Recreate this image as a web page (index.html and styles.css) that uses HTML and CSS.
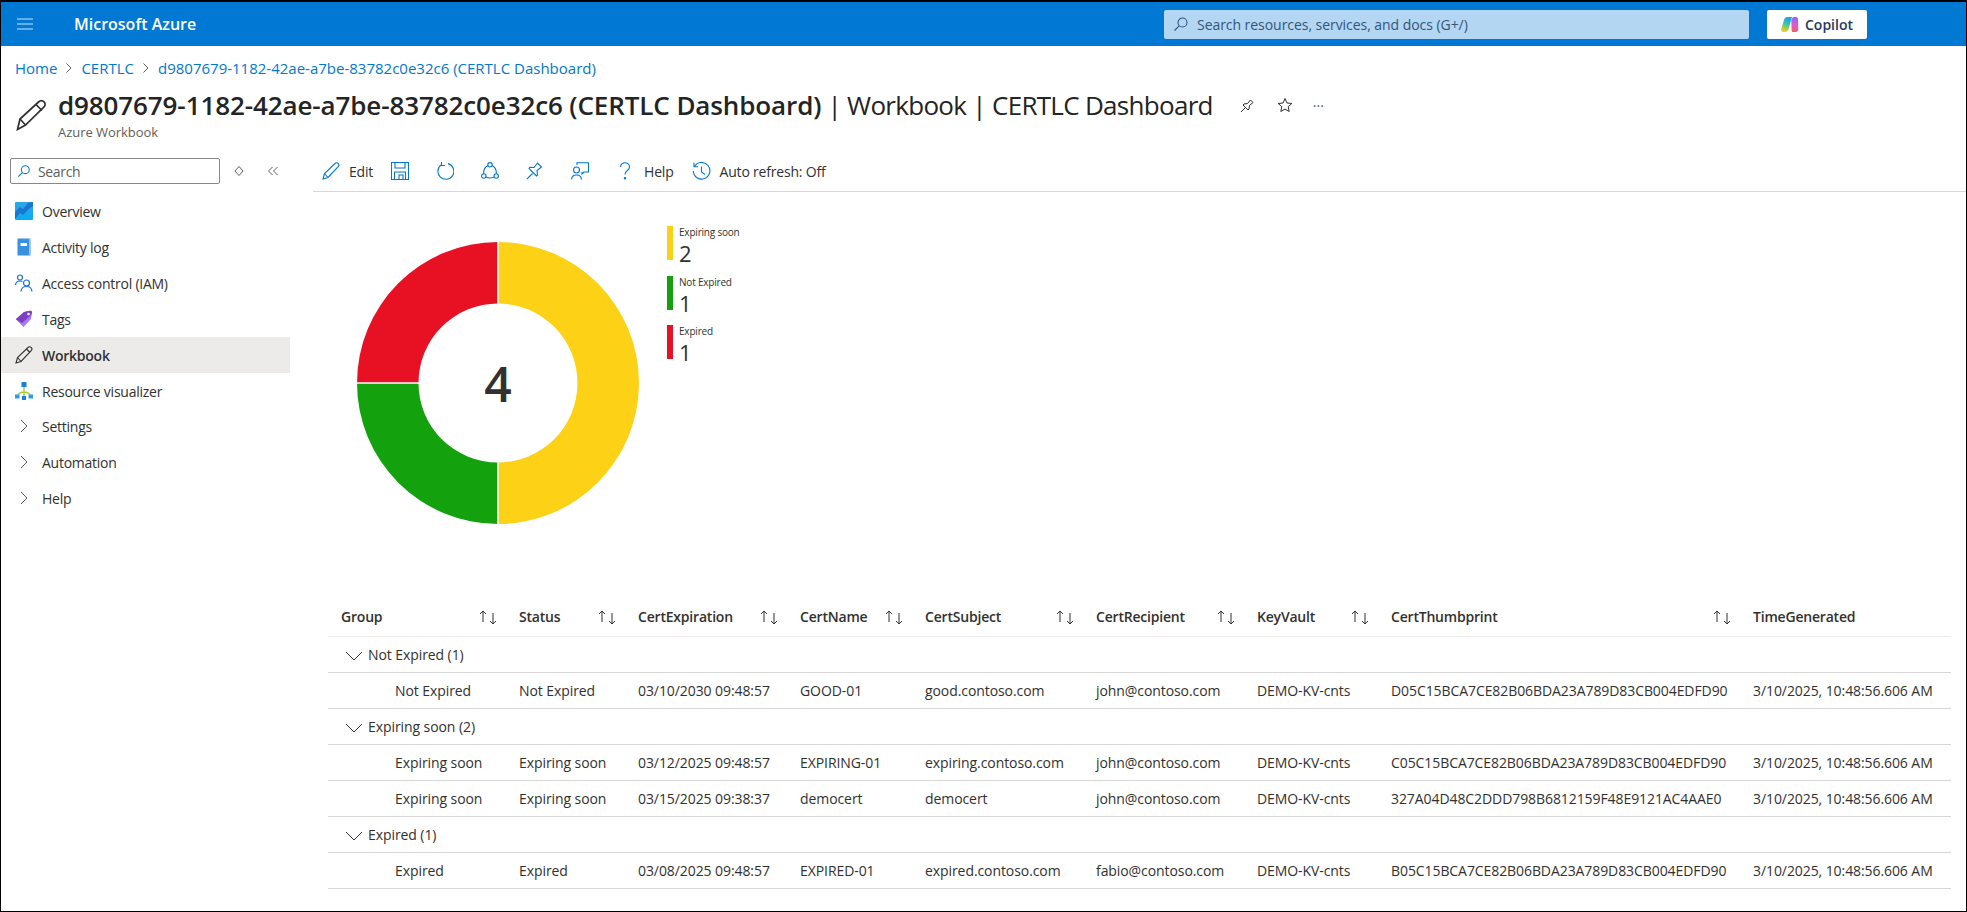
FILE: index.html
```html
<!DOCTYPE html>
<html lang="en">
<head>
  <meta charset="UTF-8">
  <title>CERTLC Dashboard - Microsoft Azure</title>
  <link rel="stylesheet" href="styles.css">
</head>
<body>
<div class="frame">

  <!-- Top bar -->
  <header class="topbar">
    <svg class="burger" width="16" height="12" viewBox="0 0 16 12"><path d="M0 1h16M0 6h16M0 11h16" stroke="#cfe4f7" stroke-width="1.2"/></svg>
    <span class="brand">Microsoft Azure</span>
    <div class="global-search">
      <svg width="16" height="16" viewBox="0 0 16 16" fill="none" stroke="#33557a" stroke-width="1.1"><circle cx="9.5" cy="6.5" r="4.5"/><path d="M6.2 9.8 1.5 14.5"/></svg>
      <span>Search resources, services, and docs (G+/)</span>
    </div>
    <div class="copilot">
      <svg width="19" height="15" viewBox="0 0 19 15">
        <defs>
          <linearGradient id="cpA" x1="0.6" y1="0" x2="0.3" y2="1"><stop offset="0" stop-color="#1f9cf0"/><stop offset=".45" stop-color="#36c7a8"/><stop offset=".8" stop-color="#b5d334"/><stop offset="1" stop-color="#ffc83a"/></linearGradient>
          <linearGradient id="cpB" x1="0.6" y1="0" x2="0.4" y2="1"><stop offset="0" stop-color="#7f6cf0"/><stop offset=".5" stop-color="#d65ad8"/><stop offset="1" stop-color="#f5604a"/></linearGradient>
        </defs>
        <path d="M6.500 0h4.500L7.500 12c-.4 1.600-1.500 3-3.500 3H2c-1.500 0-2.300-1.200-1.800-2.800L3 3c.5-1.800 1.700-3 3.500-3z" fill="url(#cpA)"/>
        <path d="M11.500 0h1.500c1.800 0 2.800 1 3.300 2.800L18.800 12c.4 1.600-.3 3-1.800 3h-2.500c-1 0-1.700-.5-2-1.500L9.700 3.500C9.500 2 10 0 11.500 0z" fill="url(#cpB)" transform="matrix(1 0 -.25 1 1.500 0)"/>
      </svg>
      <span>Copilot</span>
    </div>
  </header>

  <!-- Breadcrumb -->
  <nav class="crumbs">
    <a>Home</a><svg class="crumb-sep" width="8" height="12" viewBox="0 0 8 12"><path d="M1.500 1.500 6 6l-4.500 4.500" fill="none" stroke="#605e5c"/></svg>
    <a>CERTLC</a><svg class="crumb-sep" width="8" height="12" viewBox="0 0 8 12"><path d="M1.500 1.500 6 6l-4.500 4.500" fill="none" stroke="#605e5c"/></svg>
    <a>d9807679-1182-42ae-a7be-83782c0e32c6 (CERTLC Dashboard)</a>
  </nav>

  <!-- Page title -->
  <div class="title-row">
    <svg class="title-icon" width="31" height="32" viewBox="0 0 31 32" fill="none" stroke="#323130" stroke-width="1.700"><path d="M1.500 30.500 4 20 22.500 3c1.800-1.700 4-1.700 5.500-.2 1.600 1.600 1.500 3.800-.2 5.400L9.500 26z"/><path d="M4 20l5.500 6M20 5.500l6 6"/></svg>
    <div class="title-text">
      <div class="title-line">
        <h1><b>d9807679-1182-42ae-a7be-83782c0e32c6 (CERTLC Dashboard)</b> | Workbook | CERTLC Dashboard</h1>
        <svg class="title-pin" width="16" height="16" viewBox="0 0 16 16" fill="none" stroke="#323130"><path d="M1 15l4.500-4.500M3 8l5 5 1-1 .5-3.500L13 5.500 10.500 3 7.500 6.500 4 7z"/></svg>
        <svg class="title-star" width="16" height="16" viewBox="0 0 16 16" fill="none" stroke="#323130"><path d="M8 1.500l2 4.500 4.800.5-3.600 3.200 1 4.800L8 12.100l-4.200 2.400 1-4.800L1.200 6.500 6 6z"/></svg>
        <span class="title-more">···</span>
      </div>
      <div class="subtitle">Azure Workbook</div>
    </div>
  </div>

  <div class="content">

    <!-- Resource menu -->
    <aside class="sidebar">
      <div class="side-top">
        <div class="side-search">
          <svg width="14" height="14" viewBox="0 0 16 16" fill="none" stroke="#0078d4" stroke-width="1.200"><circle cx="9.500" cy="6.500" r="4.500"/><path d="M6.200 9.800 1.500 14.500"/></svg>
          <span>Search</span>
        </div>
        <svg class="side-diamond" width="10" height="12" viewBox="0 0 10 12" fill="none" stroke="#605e5c"><path d="M5 1.500 9 6l-4 4.500L1 6z"/></svg>
        <svg class="side-collapse" width="12" height="10" viewBox="0 0 12 10" fill="none" stroke="#605e5c"><path d="M5.500 1 1.500 5l4 4M10.500 1l-4 4 4 4"/></svg>
      </div>
      <ul class="menu">
        <li>
          <svg width="18" height="18" viewBox="0 0 18 18"><defs><linearGradient id="ovG" x1="0" y1="0" x2="0" y2="1"><stop offset="0" stop-color="#2fa6e6"/><stop offset="1" stop-color="#07aef2"/></linearGradient></defs><rect width="18" height="18" rx="1" fill="url(#ovG)"/><path d="M0 10l5-5 3 2 5-6 3-1h2v4l-4 3-6 6-3-2-5 6z" fill="#1b76cf"/></svg>
          <span>Overview</span>
        </li>
        <li>
          <svg width="18" height="18" viewBox="0 0 18 18"><rect x="2" y="0" width="14" height="18" rx="1.500" fill="#9cc8ee"/><rect x="3" y="1" width="11" height="16" fill="#3a90e0"/><rect x="5.500" y="5" width="6.500" height="3" fill="#fff"/></svg>
          <span>Activity log</span>
        </li>
        <li>
          <svg width="18" height="18" viewBox="0 0 18 18" fill="none" stroke="#1d6fd6" stroke-width="1.200"><circle cx="5" cy="3.500" r="2.500"/><path d="M.5 11c.3-2.500 1.500-4 4.500-4 1 0 1.800.2 2.500.5"/><circle cx="11.500" cy="9" r="3"/><path d="M6 17.500c.2-3 2-5 5.500-5s5.300 2 5.500 5"/></svg>
          <span>Access control (IAM)</span>
        </li>
        <li>
          <svg width="18" height="18" viewBox="0 0 18 18"><path d="M9 2 15 .8c1.200-.2 2.200.8 2 2L16 9 8.500 17 .8 9.200z" fill="#a67af4"/><path d="M.8 9.200 9 2 15 .8c1.200-.2 2.200.8 2 2L16 5 7 13z" fill="#7b3fc4"/><circle cx="13.500" cy="4" r="1.300" fill="#fff"/></svg>
          <span>Tags</span>
        </li>
        <li class="active">
          <svg width="18" height="18" viewBox="0 0 18 18" fill="none" stroke="#323130" stroke-width="1.100"><path d="M1 17l1.500-5.500L13 1.500c1-1 2.300-1 3.200 0 .9.900.9 2.200 0 3.100L6 15.500z"/><path d="M2.500 11.500 6 15.500M11.500 3l3.500 3.500"/></svg>
          <span>Workbook</span>
        </li>
        <li>
          <svg width="18" height="18" viewBox="0 0 18 18"><path d="M9 5v10M3 13c1-2 3-3 6-3s5 1 6 3" fill="none" stroke="#a4cf3c" stroke-width="1.400"/><rect x="6.500" y="0" width="5" height="5" fill="#1c7fd8"/><rect x="0" y="12.500" width="4.500" height="4" fill="#2d9be8"/><rect x="13.500" y="12.500" width="4.500" height="4" fill="#2d9be8"/><rect x="7" y="14" width="4" height="4" fill="#1c7fd8"/></svg>
          <span>Resource visualizer</span>
        </li>
        <li class="group first-group">
          <svg width="18" height="18" viewBox="0 0 18 18" fill="none" stroke="#605e5c"><path d="M6 3l6 6-6 6"/></svg>
          <span>Settings</span>
        </li>
        <li class="group">
          <svg width="18" height="18" viewBox="0 0 18 18" fill="none" stroke="#605e5c"><path d="M6 3l6 6-6 6"/></svg>
          <span>Automation</span>
        </li>
        <li class="group">
          <svg width="18" height="18" viewBox="0 0 18 18" fill="none" stroke="#605e5c"><path d="M6 3l6 6-6 6"/></svg>
          <span>Help</span>
        </li>
      </ul>
    </aside>

    <main class="main">

      <!-- Toolbar -->
      <div class="toolbar">
        <div class="tool">
          <svg width="18" height="18" viewBox="0 0 18 18" fill="none" stroke="#0078d4" stroke-width="1.100"><path d="M1 17l1.500-5.500L13 1.500c1-1 2.300-1 3.200 0 .9.900.9 2.200 0 3.100L6 15.500z"/><path d="M2.500 11.500 6 15.500"/></svg>
          <span>Edit</span>
        </div>
        <div class="tool icon-only">
          <svg width="18" height="18" viewBox="0 0 18 18" fill="none" stroke="#0078d4" stroke-width="1.100"><path d="M.5.500h17v17H.5z"/><path d="M4 .5v5.500h10V.5M3.500 17.500V10h11v7.500M8 17.500V13h4v4.500"/></svg>
        </div>
        <div class="tool icon-only">
          <svg width="18" height="18" viewBox="0 0 18 18" fill="none" stroke="#0078d4" stroke-width="1.100"><path d="M5.500 2.600A8 8 0 1 0 12 1.600"/><path d="M5.500 0v3.500H9"/></svg>
        </div>
        <div class="tool icon-only">
          <svg width="18" height="18" viewBox="0 0 18 18" fill="none" stroke="#0078d4" stroke-width="1.100"><circle cx="9" cy="2.800" r="2.200"/><circle cx="2.800" cy="14" r="2.200"/><circle cx="15.200" cy="14" r="2.200"/><path d="M6.900 3.600C4 5 2.500 8 2.600 11.800M11.100 3.600c2.900 1.400 4.400 4.400 4.300 8.200M5 15c2.600 1.300 5.400 1.300 8 0"/></svg>
        </div>
        <div class="tool icon-only">
          <svg width="18" height="18" viewBox="0 0 18 18" fill="none" stroke="#0078d4" stroke-width="1.100"><path d="M.8 17.200 6.500 11.500M4 7.500l6.500 6.500 1-1-.5-4.500 4.500-3.500L11.500 1 8 5.500l-4-.2-1 1z"/></svg>
        </div>
        <div class="tool icon-only">
          <svg width="18" height="18" viewBox="0 0 18 18" fill="none" stroke="#0078d4" stroke-width="1.100"><path d="M6 3V.8h11.500V10H13l-2 2v-2"/><circle cx="5.500" cy="8" r="3"/><path d="M.5 17.500c.2-3 2-4.500 5-4.500s4.800 1.500 5 4.500"/></svg>
        </div>
        <div class="tool help">
          <svg width="12" height="18" viewBox="0 0 12 18" fill="none" stroke="#0078d4" stroke-width="1.100"><path d="M1.500 5c0-2.500 2-4.300 4.500-4.300S10.500 2.500 10.500 5c0 3.500-4.500 3.500-4.500 7.500"/><circle cx="6" cy="16.300" r=".7" fill="#0078d4"/></svg>
          <span>Help</span>
        </div>
        <div class="tool">
          <svg width="19" height="18" viewBox="0 0 19 18" fill="none" stroke="#0078d4" stroke-width="1.100"><path d="M2.500 4.500A8.300 8.300 0 1 1 1.300 9"/><path d="M2 .8v4h4M9.500 4.500V10l3.500 2.500"/></svg>
          <span>Auto refresh: Off</span>
        </div>
      </div>

      <!-- Donut chart and legend -->
      <section class="chart">
        <svg class="donut" width="284" height="284" viewBox="0 0 284 284">
          <path d="M142 1a141 141 0 0 1 0 282V221.500a79.500 79.500 0 0 0 0-159z" fill="#fcd116"/>
          <path d="M142 283A141 141 0 0 1 1 142H62.500a79.500 79.500 0 0 0 79.500 79.500z" fill="#13a10e"/>
          <path d="M1 142A141 141 0 0 1 142 1V62.500a79.500 79.500 0 0 0-79.500 79.500z" fill="#e81123"/>
          <path d="M142 1v62M142 221v62M1 142h62" stroke="#fff" stroke-width="1.500"/>
          <text class="donut-total" x="142" y="142" text-anchor="middle" dominant-baseline="central">4</text>
        </svg>
        <ul class="legend">
          <li><i class="swatch yellow"></i><div><div class="legend-label">Expiring soon</div><div class="legend-value">2</div></div></li>
          <li><i class="swatch green"></i><div><div class="legend-label">Not Expired</div><div class="legend-value">1</div></div></li>
          <li><i class="swatch red"></i><div><div class="legend-label">Expired</div><div class="legend-value">1</div></div></li>
        </ul>
      </section>

      <!-- Certificates grid -->
      <table class="grid">
        <colgroup>
          <col class="c-group"><col class="c-status"><col class="c-exp"><col class="c-name"><col class="c-subject"><col class="c-recipient"><col class="c-vault"><col class="c-thumb"><col class="c-time">
        </colgroup>
        <thead>
          <tr>
            <th><div class="th-in">Group<svg class="sort" width="18" height="16" viewBox="0 0 18 16"><use href="#sortIcon"/></svg></div></th>
            <th><div class="th-in">Status<svg class="sort" width="18" height="16" viewBox="0 0 18 16"><use href="#sortIcon"/></svg></div></th>
            <th><div class="th-in">CertExpiration<svg class="sort" width="18" height="16" viewBox="0 0 18 16"><use href="#sortIcon"/></svg></div></th>
            <th><div class="th-in">CertName<svg class="sort" width="18" height="16" viewBox="0 0 18 16"><use href="#sortIcon"/></svg></div></th>
            <th><div class="th-in">CertSubject<svg class="sort" width="18" height="16" viewBox="0 0 18 16"><use href="#sortIcon"/></svg></div></th>
            <th><div class="th-in">CertRecipient<svg class="sort" width="18" height="16" viewBox="0 0 18 16"><use href="#sortIcon"/></svg></div></th>
            <th><div class="th-in">KeyVault<svg class="sort" width="18" height="16" viewBox="0 0 18 16"><use href="#sortIcon"/></svg></div></th>
            <th><div class="th-in">CertThumbprint<svg class="sort" width="18" height="16" viewBox="0 0 18 16"><use href="#sortIcon"/></svg></div></th>
            <th>TimeGenerated</th>
          </tr>
        </thead>
        <tbody>
          <tr class="group-row"><td colspan="9"><svg width="18" height="12" viewBox="0 0 18 12" fill="none" stroke="#323130"><path d="M1 2l8 8 8-8"/></svg>Not Expired (1)</td></tr>
          <tr>
            <td class="leaf">Not Expired</td><td>Not Expired</td><td>03/10/2030 09:48:57</td><td>GOOD-01</td><td>good.contoso.com</td><td>john@contoso.com</td><td>DEMO-KV-cnts</td><td>D05C15BCA7CE82B06BDA23A789D83CB004EDFD90</td><td>3/10/2025, 10:48:56.606 AM</td>
          </tr>
          <tr class="group-row"><td colspan="9"><svg width="18" height="12" viewBox="0 0 18 12" fill="none" stroke="#323130"><path d="M1 2l8 8 8-8"/></svg>Expiring soon (2)</td></tr>
          <tr>
            <td class="leaf">Expiring soon</td><td>Expiring soon</td><td>03/12/2025 09:48:57</td><td>EXPIRING-01</td><td>expiring.contoso.com</td><td>john@contoso.com</td><td>DEMO-KV-cnts</td><td>C05C15BCA7CE82B06BDA23A789D83CB004EDFD90</td><td>3/10/2025, 10:48:56.606 AM</td>
          </tr>
          <tr>
            <td class="leaf">Expiring soon</td><td>Expiring soon</td><td>03/15/2025 09:38:37</td><td>democert</td><td>democert</td><td>john@contoso.com</td><td>DEMO-KV-cnts</td><td>327A04D48C2DDD798B6812159F48E9121AC4AAE0</td><td>3/10/2025, 10:48:56.606 AM</td>
          </tr>
          <tr class="group-row"><td colspan="9"><svg width="18" height="12" viewBox="0 0 18 12" fill="none" stroke="#323130"><path d="M1 2l8 8 8-8"/></svg>Expired (1)</td></tr>
          <tr>
            <td class="leaf">Expired</td><td>Expired</td><td>03/08/2025 09:48:57</td><td>EXPIRED-01</td><td>expired.contoso.com</td><td>fabio@contoso.com</td><td>DEMO-KV-cnts</td><td>B05C15BCA7CE82B06BDA23A789D83CB004EDFD90</td><td>3/10/2025, 10:48:56.606 AM</td>
          </tr>
        </tbody>
      </table>
    </main>
  </div>
</div>

<svg class="defs" width="0" height="0">
  <symbol id="sortIcon" viewBox="0 0 18 16">
    <path d="M4 13V2M1 5l3-3 3 3M14 4v11M11 12l3 3 3-3" fill="none" stroke="#323130"/>
  </symbol>
</svg>
</body>
</html>
```

FILE: styles.css
```css
* { margin: 0; padding: 0; box-sizing: border-box; }
html, body {
  width: 100%;
  height: 100%;
  overflow: hidden;
  background: #fff;
  font-family: "Open Sans", "Noto Sans", sans-serif;
  color: #323130;
}
ul { list-style: none; }
.defs { position: absolute; }

.frame {
  width: 1967px;
  height: 912px;
  border: 1px solid #000;
  border-top-width: 2px;
  display: flex;
  flex-direction: column;
  overflow: hidden;
}

/* top bar */
.topbar {
  height: 44px;
  flex: none;
  background: #0078d4;
  display: flex;
  align-items: center;
}
.burger { margin-left: 16px; }
.brand {
  margin-left: 41px;
  width: 1090px;
  font-size: 16px;
  font-weight: 600;
  color: #fff;
}
.global-search {
  width: 585px;
  height: 29px;
  background: #b3d6f2;
  border-radius: 2px;
  display: flex;
  align-items: center;
  gap: 8px;
  padding-left: 9px;
  font-size: 14px;
  letter-spacing: -0.05px;
  color: #33557a;
}
.copilot {
  margin-left: 18px;
  width: 100px;
  height: 29px;
  background: #fff;
  border-radius: 2px;
  display: flex;
  align-items: center;
  justify-content: center;
  gap: 5px;
  font-size: 14px;
  font-weight: 600;
  color: #243a5e;
}

/* breadcrumb */
.crumbs {
  height: 44px;
  flex: none;
  display: flex;
  align-items: center;
  padding-left: 14px;
  font-size: 15px;
}
.crumbs a { color: #0078d4; }
.crumb-sep { margin: 0 8px; }

/* title */
.title-row {
  height: 60px;
  flex: none;
  display: flex;
  padding-left: 15px;
}
.title-icon { margin-top: 9px; flex: none; }
.title-text { margin-left: 11px; }
.title-line {
  display: flex;
  align-items: center;
  height: 30px;
}
h1 {
  font-size: 26px;
  font-weight: 400;
  line-height: 30px;
  letter-spacing: -0.7px;
  white-space: nowrap;
  color: #242424;
}
h1 b { font-weight: 600; letter-spacing: -0.11px; }
.title-pin { margin-left: 27px; }
.title-star { margin-left: 21px; }
.title-more { margin-left: 20px; font-size: 14px; color: #605e5c; }
.subtitle {
  margin-top: 4px;
  font-size: 13px;
  line-height: 16px;
  letter-spacing: -0.05px;
  color: #605e5c;
}

/* layout below the title */
.content {
  flex: 1;
  display: flex;
  min-height: 0;
}

/* sidebar */
.sidebar {
  width: 289px;
  flex: none;
  padding-top: 8px;
}
.side-top {
  display: flex;
  align-items: center;
  padding-left: 9px;
}
.side-search {
  width: 210px;
  height: 26px;
  border: 1px solid #8a8886;
  border-radius: 2px;
  display: flex;
  align-items: center;
  gap: 7px;
  padding-left: 6px;
  font-size: 14px;
  letter-spacing: -0.35px;
  color: #605e5c;
}
.side-diamond { margin-left: 14px; }
.side-collapse { margin-left: 23px; }
.menu { margin-top: 9px; }
.menu li {
  height: 36px;
  display: flex;
  align-items: center;
  gap: 9px;
  padding-left: 14px;
  font-size: 14px;
  letter-spacing: -0.25px;
}
.menu li.active {
  background: #edebe9;
  font-weight: 600;
}
.menu li.first-group { margin-top: -1px; }

/* main area */
.main {
  flex: 1;
  min-width: 0;
  margin-left: 23px;
}
.toolbar {
  height: 42px;
  display: flex;
  align-items: center;
  padding: 1px 0 0 9px;
  border-bottom: 1px solid #d6d6d6;
  font-size: 14px;
  letter-spacing: -0.2px;
}
.tool {
  display: flex;
  align-items: center;
  gap: 9px;
  margin-right: 18px;
}
.tool.icon-only { margin-right: 27px; }
.tool.help { gap: 13px; margin-left: 3px; }

/* chart */
.chart {
  display: flex;
  align-items: flex-start;
  height: 409px;
  padding: 34px 0 0 43px;
}
.donut { margin-top: 15px; flex: none; }
.donut-total { font-size: 48px; font-weight: 600; fill: #323130; }
.legend {
  margin-left: 27px;
  display: flex;
  flex-direction: column;
  gap: 15.5px;
}
.legend li {
  display: flex;
  height: 34px;
  gap: 6px;
}
.swatch { width: 6px; height: 34px; display: block; }
.yellow { background: #fcd116; }
.green { background: #13a10e; }
.red { background: #e81123; }
.legend-label {
  font-size: 10px;
  line-height: 12px;
  letter-spacing: -0.2px;
}
.legend-value {
  font-size: 22px;
  line-height: 22px;
  margin-top: 4px;
}

/* grid */
.grid {
  margin-left: 15px;
  width: 1623px;
  table-layout: fixed;
  border-collapse: separate;
  border-spacing: 0;
  font-size: 14px;
  letter-spacing: -0.08px;
}
.c-group { width: 178px; }
.c-status { width: 119px; }
.c-exp { width: 162px; }
.c-name { width: 125px; }
.c-subject { width: 171px; }
.c-recipient { width: 161px; }
.c-vault { width: 134px; }
.c-thumb { width: 362px; }
.c-time { width: 211px; }
.grid th, .grid td {
  height: 36px;
  padding: 0 0 0 13px;
  text-align: left;
  white-space: nowrap;
  overflow: hidden;
}
.grid th {
  font-weight: 600;
  letter-spacing: -0.2px;
  border-bottom: 1px solid #edebe9;
  padding-bottom: 4px;
}
.grid td { border-bottom: 1px solid #d6d6d6; }
.th-in {
  display: flex;
  align-items: center;
  justify-content: space-between;
  padding-right: 9px;
}
.grid td.leaf { padding-left: 67px; }
.group-row td { padding-left: 17px; }
.group-row svg { margin-right: 5px; vertical-align: -2px; }
```
